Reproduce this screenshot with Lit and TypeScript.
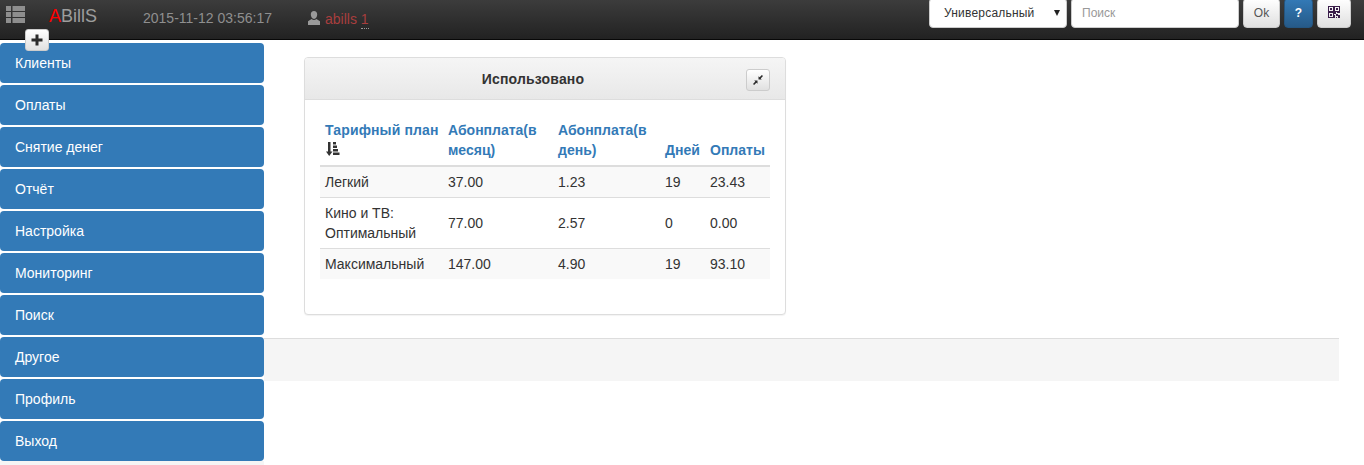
import { LitElement, html, css } from "lit";
import { customElement } from "lit/decorators.js";

const MENU = ["Клиенты", "Оплаты", "Снятие денег", "Отчёт", "Настройка", "Мониторинг", "Поиск", "Другое", "Профиль", "Выход"];
const ROWS = [
  ["Легкий", "37.00", "1.23", "19", "23.43"],
  ["Кино и ТВ: Оптимальный", "77.00", "2.57", "0", "0.00"],
  ["Максимальный", "147.00", "4.90", "19", "93.10"],
];

@customElement("app-root")
export class AppRoot extends LitElement {
  static styles = css`
    :host { display: block; position: relative; height: 465px; overflow: hidden; background: #fff;
      font-family: "Liberation Sans", Arial, sans-serif; font-size: 14px; line-height: 20px; color: #333; }
    * { box-sizing: border-box; }
    .nav { height: 40px; display: flex; align-items: flex-start; background: linear-gradient(to bottom, #3c3c3c 0, #222 100%);
      border-bottom: 1px solid #080808; position: relative; }
    .menu-ico { margin: 6px 0 0 6px; width: 19px; height: 17px; display: block; }
    .brand { margin: 6px 0 0 24px; width: 94px; font-size: 18px; line-height: 20px; color: #9d9d9d; }
    .brand b { font-weight: 400; color: #f00; }
    .date { margin-top: 8px; width: 164px; color: #8f8f8f; }
    .user { margin-top: 9px; display: flex; align-items: flex-start; color: #a83e3e; }
    .user svg { margin: 2px 4px 0 0; width: 14px; height: 14px; }
    .user u { text-decoration: none; border-bottom: 1px dotted #999; line-height: 18px; display: inline-block; }
    .tools { margin-left: auto; margin-top: -2px; margin-right: 13px; display: flex; gap: 4px; }
    .ctl { height: 30px; background: #fff; border: 1px solid #ccc; border-radius: 4px; font-size: 12px; display: flex; align-items: center; }
    .select { width: 138px; padding: 0 6px 0 14px; color: #333; justify-content: space-between; letter-spacing: .2px; }
    .select i { font-style: normal; width: 0; height: 0; border-left: 3.5px solid transparent; border-right: 3.5px solid transparent; border-top: 6px solid #222; }
    .search { width: 168px; padding: 0 10px; color: #999; }
    .btn { height: 30px; border: 1px solid #ccc; border-radius: 4px; display: flex; align-items: center; justify-content: center;
      background: linear-gradient(to bottom, #fff 0, #e0e0e0 100%); color: #333; font-size: 12px; }
    .ok { width: 37px; color: #555; }
    .help { width: 29px; background: linear-gradient(to bottom, #337ab7 0, #265a88 100%); border-color: #245580; color: #fff; font-size: 12px; font-weight: 700; }
    .qr { width: 34px; }
    .qr svg { width: 12px; height: 12px; display: block; margin-top: -2px; }
    .plus { position: absolute; left: 25px; top: 29px; width: 24px; height: 22px; border: 1px solid #ccc; border-radius: 3px; z-index: 2;
      background: linear-gradient(to bottom, #fff 0, #e0e0e0 100%); display: flex; align-items: center; justify-content: center; }
    .plus svg { width: 12px; height: 12px; display: block; }
    .layout { display: grid; grid-template-columns: 264px 1fr; padding-top: 3px; }
    .side { display: flex; flex-direction: column; gap: 2px; }
    .item { height: 40px; padding: 0 15px; display: flex; align-items: center; background: #337ab7; color: #fff; border-radius: 4px; }
    .strip { height: 6px; background: #f5f5f5; margin-top: -2px; }
    .main { display: flex; flex-direction: column; padding: 14px 25px 0 0; }
    .card { margin-left: 40px; width: 482px; height: 258px; background: #fff; border: 1px solid #ddd; border-radius: 4px; box-shadow: 0 1px 1px rgba(0,0,0,.05); }
    .head { height: 42px; padding-right: 24px; display: flex; align-items: center; justify-content: center; position: relative; border-bottom: 1px solid #ddd;
      border-radius: 3px 3px 0 0; background: linear-gradient(to bottom, #f5f5f5 0, #e8e8e8 100%); font-weight: 700; letter-spacing: .17px; }
    .collapse { position: absolute; right: 15px; top: 11px; width: 24px; height: 22px; border: 1px solid #ccc; border-radius: 3px;
      background: linear-gradient(to bottom, #fff 0, #e0e0e0 100%); display: flex; align-items: center; justify-content: center; }
    .collapse svg { width: 10px; height: 10px; display: block; }
    .body { padding: 15px; }
    table { width: 450px; border-collapse: collapse; table-layout: fixed; }
    th, td { padding: 5px; text-align: left; vertical-align: middle; }
    th { vertical-align: bottom; color: #337ab7; font-weight: 700; border-bottom: 2px solid #ddd; }
    th:first-child { letter-spacing: .12px; padding-right: 0; }
    th svg { display: block; width: 14px; height: 14px; margin: 2px 0 4px 1px; }
    td { border-top: 1px solid #ddd; }
    tbody tr:first-child td { border-top: 0; }
    tbody tr:nth-child(odd) td { background: #f9f9f9; }
    .foot { margin-top: 23px; height: 43px; background: #f5f5f5; border-top: 1px solid #ddd; }
  `;

  render() {
    return html`
      <div class="nav">
        <svg class="menu-ico" viewBox="0 0 19 17" fill="#8e8e8e">
          <rect x="0" y="0" width="5" height="5"/><rect x="6.500" y="0" width="12.500" height="5"/>
          <rect x="0" y="6" width="5" height="5"/><rect x="6.500" y="6" width="12.500" height="5"/>
          <rect x="0" y="12" width="5" height="5"/><rect x="6.500" y="12" width="12.500" height="5"/>
        </svg>
        <div class="brand"><b>A</b>BillS</div>
        <div class="date">2015-11-12 03:56:17</div>
        <div class="user">
          <svg viewBox="0 0 14 14" fill="#9a9a9a"><path d="M7 0C5 0 3.800 1.500 3.800 3.500S5 8 7 8s3.200-2.500 3.200-4.500S9 0 7 0zM4.600 8 1 10.200V14h12v-3.800L9.400 8C8 9.200 6 9.200 4.600 8z"/></svg>
          <span>abills <u>1</u></span>
        </div>
        <div class="tools">
          <div class="ctl select">Универсальный<i></i></div>
          <div class="ctl search">Поиск</div>
          <div class="btn ok">Ok</div>
          <div class="btn help">?</div>
          <div class="btn qr">
            <svg viewBox="0 0 13 13" shape-rendering="crispEdges">
              <path fill="#3a1d4a" d="M0 0h6v6H0zM1 1v4h4V1zM2 2h2v2H2zM7 0h6v6H7zM8 1v4h4V1zM9 2h2v2H9zM0 7h6v6H0zM1 8v4h4V8zM2 9h2v2H2zM7 7h2v2H7zM10 7h3v1h-3zM9 9h2v2H9zM11 10h2v3h-2zM7 10h1v3H7zM9 12h1v1H9z" fill-rule="evenodd"/>
            </svg>
          </div>
        </div>
      </div>
      <div class="plus">
        <svg viewBox="0 0 12 12" fill="#2b2b2b"><path d="M4.500 0.500h3v4h4v3h-4v4h-3v-4h-4v-3h4z"/></svg>
      </div>
      <div class="layout">
        <div class="side">
          ${MENU.map((m) => html`<div class="item">${m}</div>`)}
          <div class="strip"></div>
        </div>
        <div class="main">
          <div class="card">
            <div class="head">Использовано
              <div class="collapse">
                <svg viewBox="0 0 10 10" fill="#2b2b2b"><path d="M10 1 8.900 0 6.600 2.300 5.500 1.200V4.500H8.800L7.700 3.400zM0 9l1.100 1 2.300-2.300 1.100 1.100V5.500H1.200l1.100 1.100z"/></svg>
              </div>
            </div>
            <div class="body">
              <table>
                <colgroup><col style="width:123px"/><col style="width:110px"/><col style="width:107px"/><col style="width:45px"/><col style="width:65px"/></colgroup>
                <thead><tr>
                  <th>Тарифный план
                    <svg viewBox="0 0 14 14" fill="#333"><path d="M2 0h2.500v9.500h2L3.200 14 0 9.500h2zM7 0h3v2.500H7zM7 3.500h4V6H7zM7 7h5v2.500H7zM7 10.500h6.500V13H7z"/></svg>
                  </th>
                  <th>Абонплата(в месяц)</th><th>Абонплата(в день)</th><th>Дней</th><th>Оплаты</th>
                </tr></thead>
                <tbody>
                  ${ROWS.map((r) => html`<tr>${r.map((c) => html`<td>${c}</td>`)}</tr>`)}
                </tbody>
              </table>
            </div>
          </div>
          <div class="foot"></div>
        </div>
      </div>
    `;
  }
}
